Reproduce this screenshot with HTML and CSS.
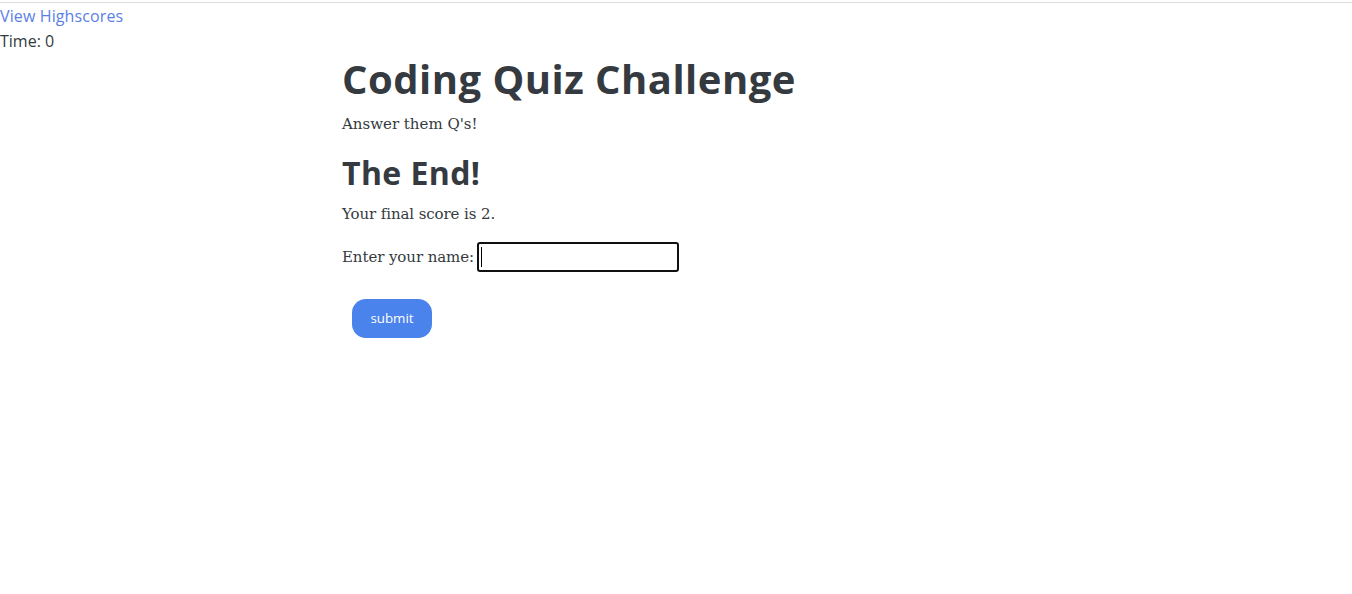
FILE: index.html
```html
<!DOCTYPE html>
<html lang="en">
<head>
<meta charset="utf-8">
<title>Coding Quiz Challenge</title>
<link rel="stylesheet" href="styles.css">
</head>
<body>
<header class="topbar">
  <a class="highscores" href="#">View Highscores</a>
  <div class="timer">Time: 0</div>
</header>
<main class="quiz">
  <h1 class="title">Coding Quiz Challenge</h1>
  <p class="subtitle">Answer them Q's!</p>
  <section class="end">
    <h2 class="end-title">The End!</h2>
    <p class="score">Your final score is 2.</p>
    <form class="name-form">
      <label class="name-row">Enter your name: <span class="input-wrap"><input class="name-input" type="text"><span class="caret"></span></span></label>
      <button class="submit" type="button">submit</button>
    </form>
  </section>
</main>
</body>
</html>
```
FILE: styles.css
```css
html, body {
  margin: 0;
  padding: 0;
  background: #fff;
}
body {
  font-family: "Open Sans", "Noto Sans", sans-serif;
  color: #343a40;
}
.topbar {
  margin-top: 2px;
  padding-top: 1px;
  border-top: 1px solid #dcdcdc;
  display: flex;
  flex-direction: column;
  align-items: flex-start;
  gap: 1px;
  font-size: 16px;
  line-height: 24px;
}
.highscores {
  color: #5b80e4;
  text-decoration: none;
  letter-spacing: 0.12px;
}
.timer {
  color: #343a40;
}
.quiz {
  margin-left: 342px;
  font-family: "DejaVu Serif", Georgia, serif;
  font-size: 15px;
  color: #343a40;
}
.title {
  font-family: "Open Sans", sans-serif;
  font-weight: 700;
  font-size: 40px;
  line-height: 48px;
  letter-spacing: 0.48px;
  margin: 1.5px 0 9.3px;
}
.subtitle {
  margin: 0;
  line-height: 24px;
}
.end-title {
  font-family: "Open Sans", sans-serif;
  font-weight: 700;
  font-size: 32px;
  line-height: 38.4px;
  letter-spacing: 0.4px;
  margin: 18.6px 0 9px;
}
.score {
  margin: 0;
  line-height: 24px;
  letter-spacing: -0.1px;
}
.name-form {
  margin-top: 16.2px;
}
.name-row {
  display: flex;
  align-items: center;
  gap: 3px;
  line-height: 24px;
  padding-top: 1px;
  height: 30px;
  box-sizing: border-box;
  letter-spacing: -0.08px;
}
.input-wrap {
  position: relative;
  display: block;
  margin-top: -1px;
}
.name-input {
  display: block;
  width: 202px;
  height: 30px;
  box-sizing: border-box;
  border: 2px solid #101010;
  border-radius: 3px;
  outline: none;
  padding: 0 3px;
  margin: 0;
  font-size: 14px;
}
.caret {
  position: absolute;
  left: 4px;
  top: 5px;
  width: 1px;
  height: 20px;
  background: #000;
}
.submit {
  display: block;
  margin: 27px 0 0 10px;
  width: 80px;
  height: 39px;
  border: none;
  border-radius: 14px;
  background: #4a83ec;
  color: #fff;
  font-family: "Open Sans", sans-serif;
  font-size: 13.33px;
  padding: 0;
  cursor: pointer;
}
```
